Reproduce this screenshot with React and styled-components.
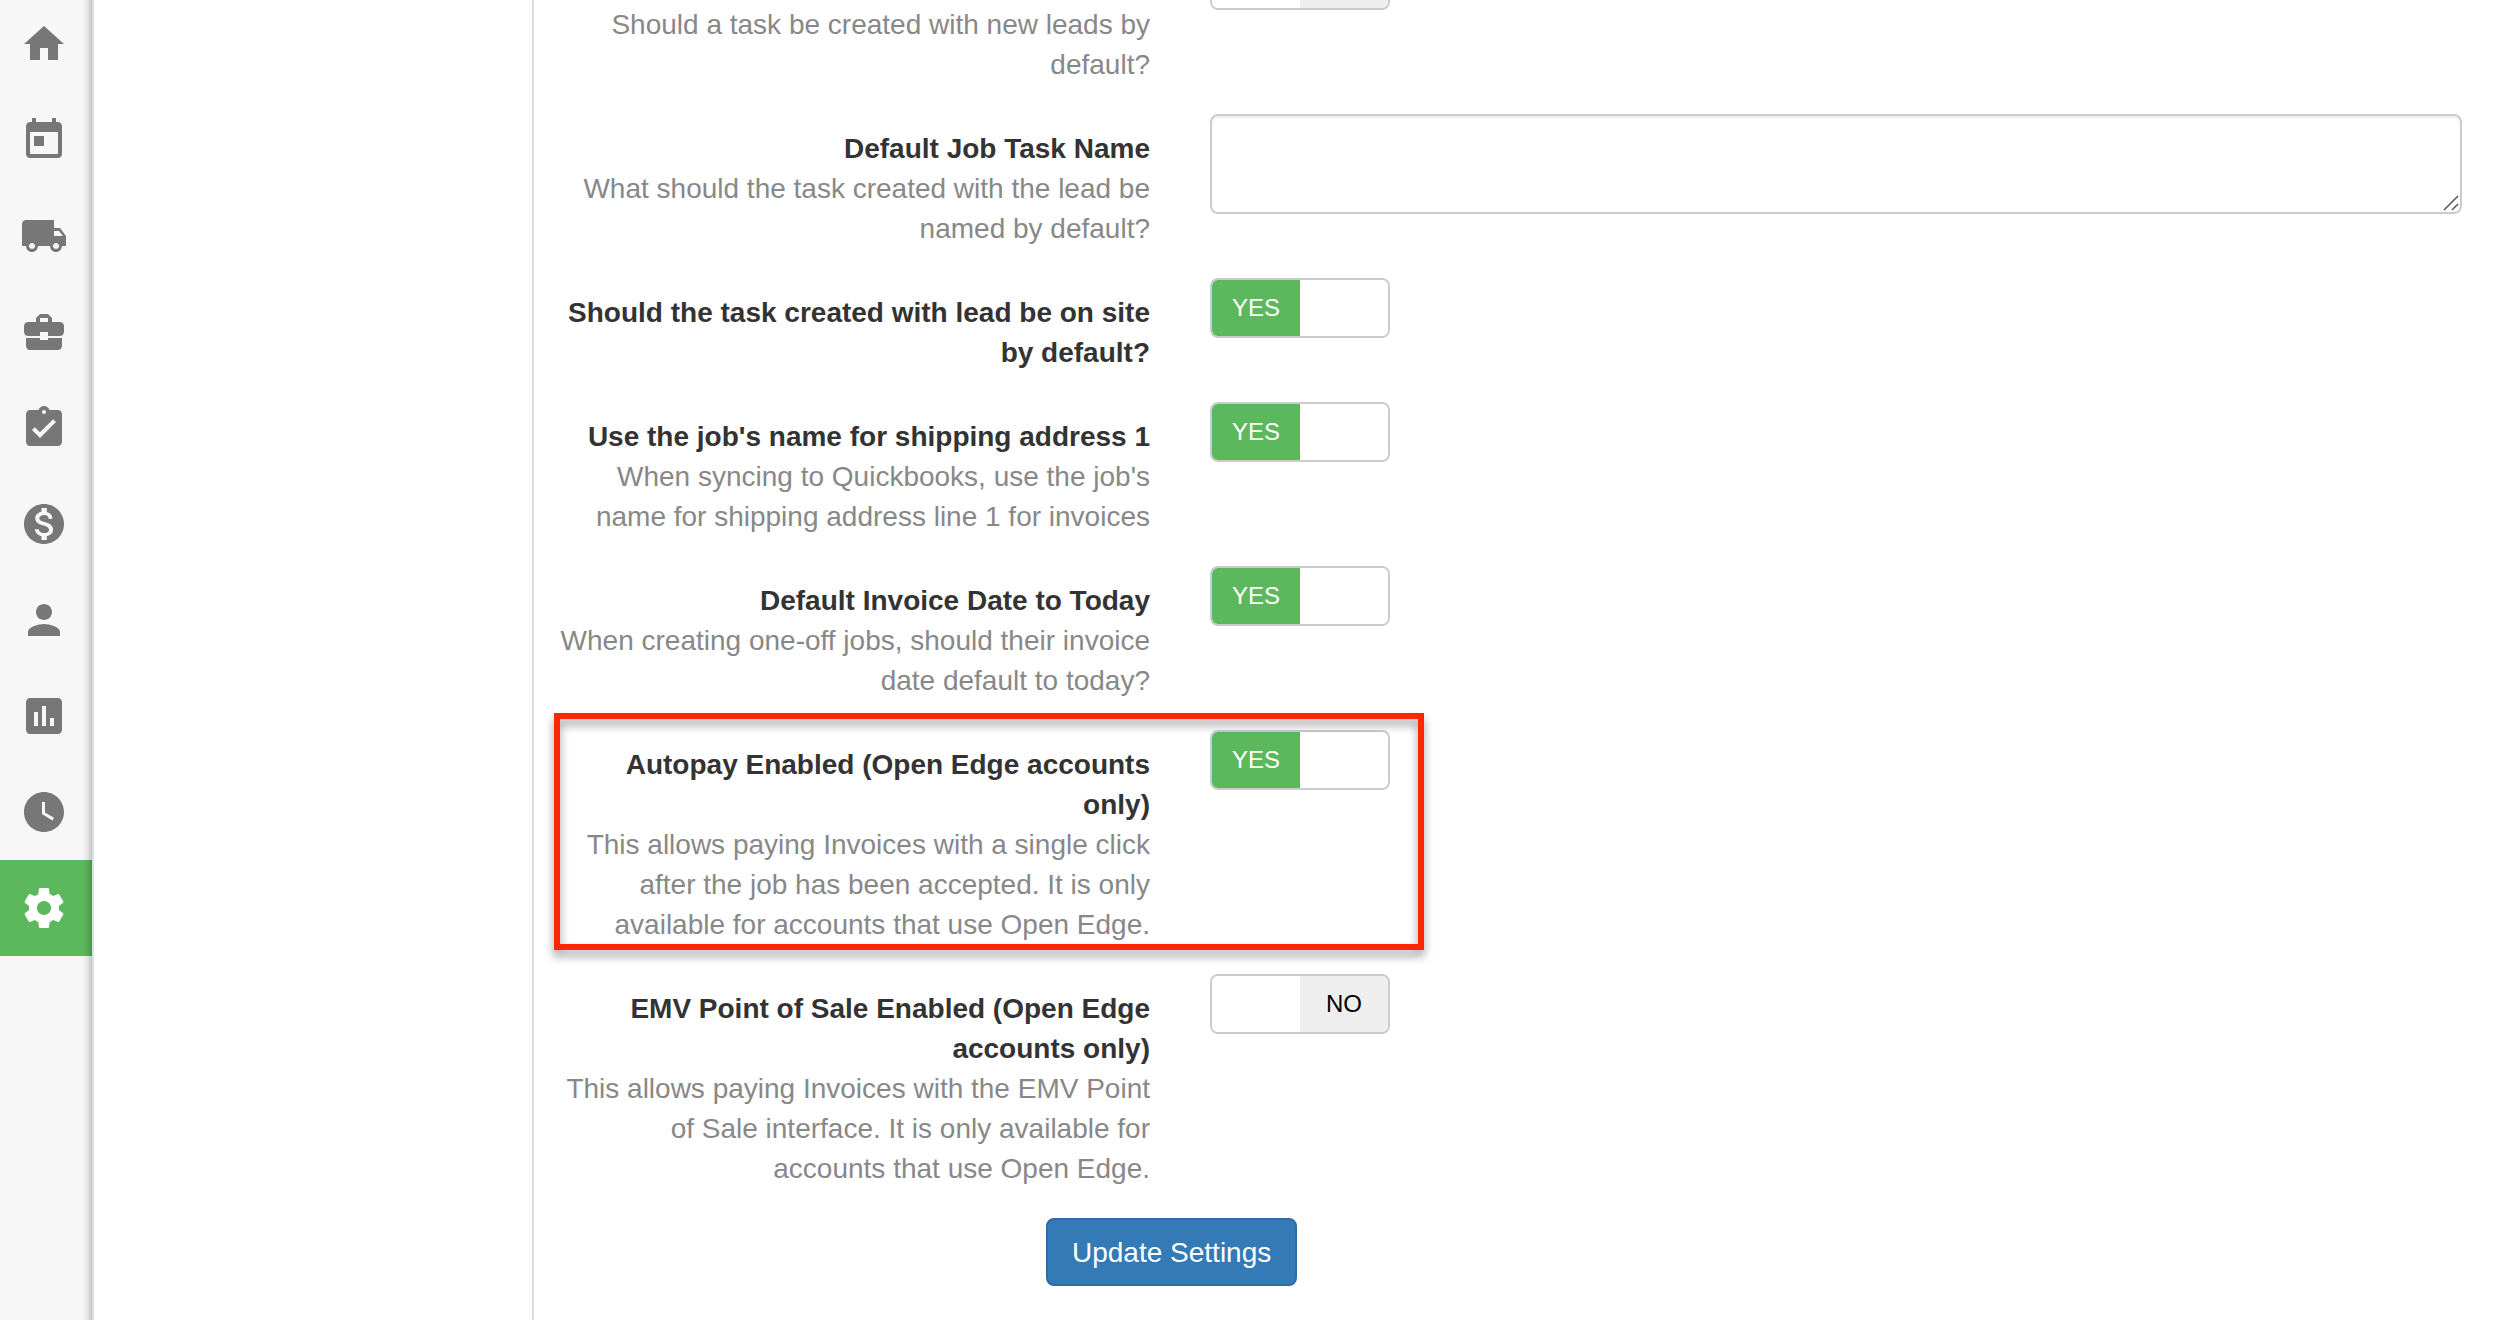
import React from "react";
import styled, { createGlobalStyle } from "styled-components";

const GlobalStyle = createGlobalStyle`
  *, *::before, *::after { box-sizing: border-box; }
  body {
    margin: 0;
    overflow: hidden;
    background: #fff;
    color: #333;
    font-family: "Liberation Sans", Arial, Helvetica, sans-serif;
    font-size: 28px;
    line-height: 40px;
  }
`;

const Page = styled.div`
  display: flex;
  height: 100vh;
  overflow: hidden;
`;

const Sidebar = styled.nav`
  flex: none;
  display: flex;
  flex-direction: column;
  width: 94px;
  background: #f7f7f7;
  border-right: 2px solid #d9e2e9;
  position: relative;

  &::after {
    content: "";
    position: absolute;
    inset: 0 0 0 auto;
    width: 10px;
    background: linear-gradient(to right, rgba(0, 0, 0, 0), rgba(0, 0, 0, 0.06) 50%, rgba(0, 0, 0, 0.2));
    pointer-events: none;
  }
`;

const NavList = styled.div`
  display: flex;
  flex-direction: column;
  margin-top: -4px;
`;

const NavLink = styled.a`
  display: block;
  height: 96px;
  padding: 24px 20px;
  color: ${(p) => (p.$active ? "#fff" : "#777")};
  background: ${(p) => (p.$active ? "#5cb85c" : "transparent")};

  svg {
    display: block;
    width: 48px;
    height: 48px;
    fill: currentColor;
  }
`;

const SidePanel = styled.aside`
  flex: none;
  width: 440px;
  border-right: 2px solid #ddd;
`;

const Form = styled.form`
  flex: 1;
  min-width: 0;
  margin: -50px 26px 0 -10px;
`;

const Row = styled.div`
  position: relative;
  display: grid;
  grid-template-columns: 1fr 2fr;
  min-height: ${(p) => (p.$tall ? "135px" : "0")};
  margin-bottom: 29px;
`;

const LabelCell = styled.label`
  align-self: end;
  padding: 15px 30px 0;
  text-align: right;
`;

const Title = styled.strong`
  display: block;
  font-weight: 700;
`;

const Hint = styled.span`
  display: block;
  color: #888;
`;

const ControlCell = styled.div`
  padding: 0 30px;
`;

const Switch = styled.span`
  position: relative;
  display: flex;
  width: 180px;
  height: 60px;
  border: 2px solid #ccc;
  border-radius: 8px;
  overflow: hidden;
  font-size: 24px;
  line-height: 56px;
  text-align: center;
`;

const SwitchInput = styled.input`
  position: absolute;
  inset: 0;
  width: 100%;
  height: 100%;
  margin: 0;
  opacity: 0;
  cursor: pointer;
`;

const SwitchHalf = styled.span`
  flex: 1;
  color: ${(p) => (p.$on ? "#fff" : "#000")};
  background: ${(p) => (p.$on ? "#5cb85c" : p.$off ? "#eee" : "#fff")};
`;

const TextAreaWrap = styled.div`
  position: relative;
  display: flex;

  svg {
    position: absolute;
    right: 3px;
    bottom: 3px;
    width: 16px;
    height: 16px;
    pointer-events: none;
  }
`;

const TextArea = styled.textarea`
  width: 100%;
  height: 100px;
  padding: 12px 24px;
  border: 2px solid #ccc;
  border-radius: 8px;
  box-shadow: inset 0 2px 2px rgba(0, 0, 0, 0.075);
  color: #555;
  font: inherit;
  resize: none;
  outline: none;
`;

const Highlight = styled.div`
  position: absolute;
  top: -17px;
  bottom: -5px;
  left: 30px;
  width: calc(100% / 3 + 214px);
  border: 6px solid #ff2600;
  filter: drop-shadow(0 6px 5px rgba(0, 0, 0, 0.4));
  pointer-events: none;
`;

const Actions = styled.div`
  padding-left: calc(25% + 30px);
`;

const SubmitButton = styled.button`
  padding: 13px 24px 11px;
  border: 2px solid #2e6da4;
  border-radius: 8px;
  background: #337ab7;
  color: #fff;
  font: inherit;
  cursor: pointer;
`;

const NAV = [
  { name: "Home", d: "M10 20v-6h4v6h5v-8h3L12 3 2 12h3v8z" },
  {
    name: "Calendar",
    d: "M19 3h-1V1h-2v2H8V1H6v2H5c-1.11 0-1.99.9-1.99 2L3 19c0 1.1.89 2 2 2h14c1.1 0 2-.9 2-2V5c0-1.1-.9-2-2-2zm0 16H5V8h14v11zM7 10h5v5H7z",
  },
  {
    name: "Deliveries",
    d: "M20 8h-3V4H3c-1.1 0-2 .9-2 2v11h2c0 1.66 1.34 3 3 3s3-1.34 3-3h6c0 1.66 1.34 3 3 3s3-1.34 3-3h2v-5l-3-4zM6 18.5c-.83 0-1.5-.67-1.5-1.5s.67-1.5 1.5-1.5 1.5.67 1.5 1.5-.67 1.5-1.5 1.5zm13.5-9l1.96 2.5H17V9.5h2.5zm-1.5 9c-.83 0-1.5-.67-1.5-1.5s.67-1.5 1.5-1.5 1.5.67 1.5 1.5-.67 1.5-1.5 1.5z",
  },
  {
    name: "Jobs",
    d: "M10 16v-1H3.01L3 19c0 1.11.89 2 2 2h14c1.11 0 2-.89 2-2v-4h-7v1h-4zm10-9h-4.01V5l-2-2h-4l-2 2v2H4c-1.1 0-2 .9-2 2v3c0 1.11.89 2 2 2h6v-2h4v2h6c1.1 0 2-.9 2-2V9c0-1.1-.9-2-2-2zm-6 0h-4V5h4v2z",
  },
  {
    name: "Tasks",
    d: "M19 3h-4.18C14.4 1.84 13.3 1 12 1c-1.3 0-2.4.84-2.82 2H5c-1.1 0-2 .9-2 2v14c0 1.1.9 2 2 2h14c1.1 0 2-.9 2-2V5c0-1.1-.9-2-2-2zm-7 0c.55 0 1 .45 1 1s-.45 1-1 1-1-.45-1-1 .45-1 1-1zm-2 14l-4-4 1.41-1.41L10 14.17l6.59-6.59L18 9l-8 8z",
  },
  {
    name: "Billing",
    d: "M12 2C6.48 2 2 6.48 2 12s4.48 10 10 10 10-4.48 10-10S17.52 2 12 2zm1.41 16.09V20h-2.67v-1.93c-1.71-.36-3.16-1.46-3.27-3.4h1.96c.1 1.05.82 1.87 2.65 1.87 1.96 0 2.4-.98 2.4-1.59 0-.83-.44-1.61-2.67-2.14-2.48-.6-4.18-1.62-4.18-3.67 0-1.72 1.39-2.84 3.11-3.21V4h2.67v1.95c1.86.45 2.79 1.86 2.85 3.39H14.3c-.05-1.11-.64-1.87-2.22-1.87-1.5 0-2.4.68-2.4 1.64 0 .84.65 1.39 2.67 1.91s4.18 1.39 4.18 3.91c-.01 1.83-1.38 2.83-3.12 3.16z",
  },
  {
    name: "Contacts",
    d: "M12 12c2.21 0 4-1.79 4-4s-1.79-4-4-4-4 1.79-4 4 1.79 4 4 4zm0 2c-2.67 0-8 1.34-8 4v2h16v-2c0-2.66-5.33-4-8-4z",
  },
  {
    name: "Reports",
    d: "M19 3H5c-1.1 0-2 .9-2 2v14c0 1.1.9 2 2 2h14c1.1 0 2-.9 2-2V5c0-1.1-.9-2-2-2zM9 17H7v-7h2v7zm4 0h-2V7h2v10zm4 0h-2v-4h2v4z",
  },
  {
    name: "Time",
    d: "M12 2C6.5 2 2 6.5 2 12s4.5 10 10 10 10-4.5 10-10S17.5 2 12 2zm4.2 14.2L11 13V7h1.5v5.2l4.5 2.7-.8 1.3z",
  },
  {
    name: "Settings",
    active: true,
    d: "M19.43 12.98c.04-.32.07-.64.07-.98s-.03-.66-.07-.98l2.11-1.65c.19-.15.24-.42.12-.64l-2-3.46c-.12-.22-.39-.3-.61-.22l-2.49 1c-.52-.4-1.08-.73-1.69-.98l-.38-2.65C14.46 2.18 14.25 2 14 2h-4c-.25 0-.46.18-.49.42l-.38 2.65c-.61.25-1.17.59-1.69.98l-2.49-1c-.23-.09-.49 0-.61.22l-2 3.46c-.13.22-.07.49.12.64l2.11 1.65c-.04.32-.07.65-.07.98s.03.66.07.98l-2.11 1.65c-.19.15-.24.42-.12.64l2 3.46c.12.22.39.3.61.22l2.49-1c.52.4 1.08.73 1.69.98l.38 2.65c.03.24.24.42.49.42h4c.25 0 .46-.18.49-.42l.38-2.65c.61-.25 1.17-.59 1.69-.98l2.49 1c.23.09.49 0 .61-.22l2-3.46c.12-.22.07-.49-.12-.64l-2.11-1.65zM12 15.5c-1.93 0-3.5-1.57-3.5-3.5s1.57-3.5 3.5-3.5 3.5 1.57 3.5 3.5-1.57 3.5-3.5 3.5z",
  },
];

const SETTINGS = [
  {
    id: "lead-task",
    hint: "Should a task be created with new leads by default?",
    on: false,
    tall: true,
    plain: true,
  },
  {
    id: "task-name",
    title: "Default Job Task Name",
    hint: "What should the task created with the lead be named by default?",
    text: true,
  },
  { id: "task-on-site", title: "Should the task created with lead be on site by default?", on: true },
  {
    id: "shipping-name",
    title: "Use the job's name for shipping address 1",
    hint: "When syncing to Quickbooks, use the job's name for shipping address line 1 for invoices",
    on: true,
  },
  {
    id: "invoice-date",
    title: "Default Invoice Date to Today",
    hint: "When creating one-off jobs, should their invoice date default to today?",
    on: true,
  },
  {
    id: "autopay",
    title: "Autopay Enabled (Open Edge accounts only)",
    hint: "This allows paying Invoices with a single click after the job has been accepted. It is only available for accounts that use Open Edge.",
    on: true,
    highlighted: true,
  },
  {
    id: "emv",
    title: "EMV Point of Sale Enabled (Open Edge accounts only)",
    hint: "This allows paying Invoices with the EMV Point of Sale interface. It is only available for accounts that use Open Edge.",
    on: false,
  },
];

function Toggle({ id, initial, plain }) {
  const [on, setOn] = React.useState(initial);
  return (
    <Switch>
      <SwitchHalf $on={on}>{on && !plain ? "YES" : ""}</SwitchHalf>
      <SwitchHalf $off={!on}>{on || plain ? "" : "NO"}</SwitchHalf>
      <SwitchInput id={id} type="checkbox" checked={on} onChange={(e) => setOn(e.target.checked)} />
    </Switch>
  );
}

function ResizableText({ id }) {
  return (
    <TextAreaWrap>
      <TextArea id={id} />
      <svg viewBox="0 0 16 16" fill="none" stroke="#555" strokeWidth="1.5" aria-hidden="true">
        <path d="M1 15L15 1M9 15L15 9" />
      </svg>
    </TextAreaWrap>
  );
}

export default function App() {
  return (
    <>
      <GlobalStyle />
      <Page>
        <Sidebar>
          <NavList>
            {NAV.map((item) => (
              <NavLink key={item.name} href="#" aria-label={item.name} $active={item.active}>
                <svg viewBox="0 0 24 24" aria-hidden="true">
                  <path d={item.d} />
                </svg>
              </NavLink>
            ))}
          </NavList>
        </Sidebar>
        <SidePanel />
        <Form onSubmit={(e) => e.preventDefault()}>
          {SETTINGS.map((s) => (
            <Row key={s.id} $tall={s.tall}>
              <LabelCell htmlFor={s.id}>
                {s.title && <Title>{s.title}</Title>}
                {s.hint && <Hint>{s.hint}</Hint>}
              </LabelCell>
              <ControlCell>
                {s.text ? (
                  <ResizableText id={s.id} />
                ) : (
                  <Toggle id={s.id} initial={s.on} plain={s.plain} />
                )}
              </ControlCell>
              {s.highlighted && <Highlight />}
            </Row>
          ))}
          <Actions>
            <SubmitButton type="submit">Update Settings</SubmitButton>
          </Actions>
        </Form>
      </Page>
    </>
  );
}
